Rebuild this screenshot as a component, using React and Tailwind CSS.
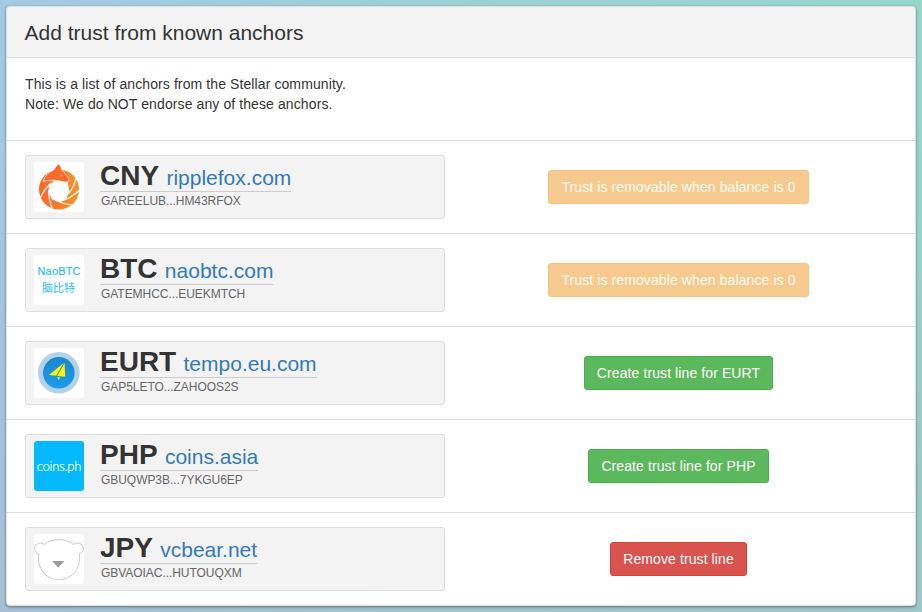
const FoxLogo = () => (
  <svg viewBox="0 0 50 50" className="h-full w-full">
    <defs>
      <linearGradient id="fox" x1="0" x2="1" y1="0" y2="0">
        <stop offset="0" stopColor="#fb672b" />
        <stop offset="1" stopColor="#fb9327" />
      </linearGradient>
    </defs>
    <circle cx="25" cy="27.5" r="20" fill="url(#fox)" />
    <path fill="#fff" d="M20 18.5 L14.8 24 L14.6 31 L18.4 37.4 L26 39.8 L32.6 36 L35.4 29 L33.5 19.5 Z" />
    <g stroke="#fff" strokeWidth="1.2" fill="none">
      <path d="M17 21 Q9.5 28 6 37" />
      <path d="M14.7 28 Q14.5 38 18.5 47" />
      <path d="M17 35.5 Q26 41.5 38 43" />
      <path d="M25.5 39.6 Q37 36.5 45.5 28" />
      <path d="M34.3 32 Q41 24 42 14.5" />
    </g>
    <path
      fill="#fb692b"
      stroke="#fff"
      strokeWidth=".7"
      d="M9 19.2 Q12.5 10.5 19.5 8.3 Q21.5 4.3 25.2 1.6 Q27 5 28 8.3 Q30.5 9.3 31 12 Q34.5 14.5 35.2 18.7 Q32 21.3 28 19.4 Q19 16.8 9 19.2 Z"
    />
    <path d="M26 12.8 L28.3 14 L26.5 14.5 Z" fill="#fff" />
  </svg>
);

const NaoLogo = () => (
  <svg viewBox="0 0 50 50" className="h-full w-full" fill="#2fc0ec">
    <text x="3.5" y="20" fontSize="11" textLength="43" stroke="#2fc0ec" strokeWidth=".2" fontFamily="Liberation Sans, Arial, sans-serif">NaoBTC</text>
    <text x="8" y="37" fontSize="11" textLength="33" fontFamily="Noto Sans CJK SC, sans-serif">脑比特</text>
  </svg>
);

const TempoLogo = () => (
  <svg viewBox="0 0 50 50" className="h-full w-full">
    <defs>
      <linearGradient id="tempo" x1="0" x2="0" y1="0" y2="1">
        <stop offset="0" stopColor="#1b86cc" />
        <stop offset="1" stopColor="#1c9bec" />
      </linearGradient>
    </defs>
    <circle cx="24.8" cy="24.8" r="20.8" fill="#b2d2e8" />
    <circle cx="24.8" cy="24.8" r="15.8" fill="url(#tempo)" />
    <path fill="#fdf801" d="M29.6 15 L15 26.9 L22.3 27.8 Z M30.6 15 L23.2 28 L31.2 28.8 Z M23 29.2 L26 29.2 L24.8 32 Z" />
  </svg>
);

const CoinsLogo = () => (
  <div className="flex h-full items-center justify-center rounded-[3px] bg-[#05b9fe] font-[Lato,sans-serif] text-[13px] leading-5 font-light tracking-[-0.2px] text-white [-webkit-text-stroke:0.2px_white]">
    coins.ph
  </div>
);

const BearLogo = () => (
  <svg viewBox="0 0 50 50" className="h-full w-full">
    <path
      fill="none"
      stroke="#c9c9c9"
      strokeWidth="1"
      d="M10.5 10.5 C7 7.5 1 9.5 .7 14 C.5 17.5 2 19.5 4.5 19.5 C3 34 11 45.5 25 45.5 C39 45.5 47 34 45.5 19.5 C48 19.5 49.5 17.5 49.3 14 C49 9.5 43 7.5 39.5 10.5 C32 4 18 4 10.5 10.5 Z"
    />
    <path fill="#999" d="M18 27 H30.5 L24.2 33.5 Z" />
  </svg>
);

const warning = "border-[#f4c381] bg-[#f6ca8e] text-[#fffaf2]";
const success = "border-[#4cae4c] bg-[#5cb85c] text-white";
const danger = "border-[#d43f3a] bg-[#d9534f] text-white";

const anchors = [
  { code: "CNY", domain: "ripplefox.com", account: "GAREELUB...HM43RFOX", Logo: FoxLogo, action: "Trust is removable when balance is 0", tone: warning, disabled: true },
  { code: "BTC", domain: "naobtc.com", account: "GATEMHCC...EUEKMTCH", Logo: NaoLogo, action: "Trust is removable when balance is 0", tone: warning, disabled: true },
  { code: "EURT", domain: "tempo.eu.com", account: "GAP5LETO...ZAHOOS2S", Logo: TempoLogo, action: "Create trust line for EURT", tone: success },
  { code: "PHP", domain: "coins.asia", account: "GBUQWP3B...7YKGU6EP", Logo: CoinsLogo, action: "Create trust line for PHP", tone: success },
  { code: "JPY", domain: "vcbear.net", account: "GBVAOIAC...HUTOUQXM", Logo: BearLogo, action: "Remove trust line", tone: danger },
];

function AnchorRow({ code, domain, account, Logo, action, tone, disabled }) {
  return (
    <li className="flex h-[93px] items-start border-t border-[#ddd] pt-3.5 pl-[18px]">
      <div className="flex h-16 w-[420px] shrink-0 rounded-[3px] border border-[#ddd] bg-[#f3f3f3] pt-1.5 pl-2">
        <div className="size-[50px] shrink-0 rounded-[3px] bg-white">
          <Logo />
        </div>
        <div className="ml-4 flex flex-col items-start">
          <div className="h-[30px] border-b border-[#ccc] leading-[28px] whitespace-nowrap">
            <strong className="text-[28px] font-bold text-[#333]">{code}</strong>
            <a className="ml-[7.3px] text-[21px] text-[#337ab7]">{domain}</a>
          </div>
          <div className="pt-px pl-px text-xs leading-[17px] tracking-[-0.05px] text-[#666]">{account}</div>
        </div>
      </div>
      <div className="flex w-[467px] justify-center pt-[15px]">
        <button disabled={disabled} className={`h-[34px] rounded-[3px] border px-3 text-sm leading-5 tracking-[0.1px] whitespace-nowrap ${tone}`}>
          {action}
        </button>
      </div>
    </li>
  );
}

export default function App() {
  return (
    <div className="h-[612px] w-[922px] bg-[linear-gradient(to_bottom,rgba(170,175,190,0)_20%,rgba(170,175,190,0.4)_100%),linear-gradient(to_right,#a3c9e3,#9dd0d6_40%,#98d5cb)] p-1.5 font-['Liberation_Sans',Arial,sans-serif]">
      <section className="h-[600px] w-[910px] overflow-hidden rounded-[4px] border border-[#ddd] bg-white shadow-[0_1px_3px_rgba(0,0,0,0.4)]">
        <header className="h-[51px] border-b border-[#ddd] bg-[#f3f3f3] pt-3 pl-[17.5px]">
          <h3 className="text-[21px] leading-7 text-[#333]">Add trust from known anchors</h3>
        </header>
        <p className="h-[82px] pt-4 pl-[18px] text-sm leading-5 tracking-[0.1px] text-[#333]">
          This is a list of anchors from the Stellar community.
          <br />
          Note: We do NOT endorse any of these anchors.
        </p>
        <ul>
          {anchors.map((a) => (
            <AnchorRow key={a.code} {...a} />
          ))}
        </ul>
      </section>
    </div>
  );
}
